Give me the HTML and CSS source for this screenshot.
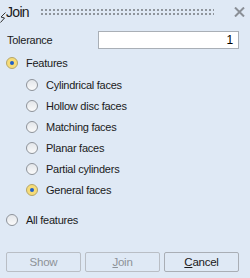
FILE: index.html
```html
<!DOCTYPE html>
<html lang="en">
<head>
  <meta charset="UTF-8">
  <title>Join</title>
  <link rel="stylesheet" href="styles.css">
</head>
<body>
  <div class="panel">
    <!-- Title bar -->
    <div class="titlebar">
      <svg class="cursor" width="7" height="11" viewBox="0 0 7 11">
        <path d="M5.5 0.5 L1 5 L4.5 6 L0.5 10.5" fill="none" stroke="#333" stroke-width="1"/>
      </svg>
      <span class="title">Join</span>
      <span class="grip"></span>
      <svg class="close" width="11" height="10" viewBox="0 0 11 10">
        <path d="M1 0.5 L10 9.5 M10 0.5 L1 9.5" stroke="#8a8f96" stroke-width="2"/>
      </svg>
    </div>

    <!-- Tolerance -->
    <div class="field">
      <label>Tolerance</label>
      <div class="input">1</div>
    </div>

    <!-- Options -->
    <div class="radio checked top"><span class="dot"></span>Features</div>
    <div class="sub">
      <div class="radio"><span class="dot"></span>Cylindrical faces</div>
      <div class="radio"><span class="dot"></span>Hollow disc faces</div>
      <div class="radio"><span class="dot"></span>Matching faces</div>
      <div class="radio"><span class="dot"></span>Planar faces</div>
      <div class="radio"><span class="dot"></span>Partial cylinders</div>
      <div class="radio checked"><span class="dot"></span>General faces</div>
    </div>
    <div class="radio all"><span class="dot"></span>All features</div>

    <!-- Buttons -->
    <div class="buttons">
      <div class="btn disabled">Show</div>
      <div class="btn disabled"><u>J</u>oin</div>
      <div class="btn"><u>C</u>ancel</div>
    </div>
  </div>
</body>
</html>
```
FILE: styles.css
```css
/* Global */
body {
  margin: 0;
  padding: 0;
  background-color: #dfe9f5;
  font-family: "Liberation Sans", Arial, sans-serif;
  font-size: 11px;
  letter-spacing: -0.25px;
  color: #1a1a1a;
}
.panel {
  width: 250px;
  height: 278px;
  display: flex;
  flex-direction: column;
}

/* Title bar */
.titlebar {
  height: 24px;
  display: flex;
  align-items: center;
  position: relative;
}
.cursor {
  position: absolute;
  left: 0;
  top: 12px;
}
.title {
  font-size: 14px;
  letter-spacing: -0.7px;
  margin-left: 6px;
  color: #1a1a1a;
}
.grip {
  flex: 1;
  height: 6px;
  margin: 0 20px 0 12px;
  background-image:
    linear-gradient(to right, transparent 2px, #dfe9f5 2px),
    linear-gradient(to bottom, #8f959c 2px, transparent 2px);
  background-size: 4px 4px;
}
.close {
  margin-right: 5px;
}

/* Tolerance */
.field {
  display: flex;
  align-items: center;
  justify-content: space-between;
  margin: 7px 11px 0 7px;
}
.input {
  width: 134px;
  height: 16px;
  line-height: 16px;
  border: 1px solid #a9afb6;
  background-color: #fff;
  text-align: right;
  padding-right: 5px;
  font-size: 12px;
  color: #000;
}

/* Radios */
.radio {
  display: flex;
  align-items: center;
  height: 21px;
}
.dot {
  width: 10px;
  height: 10px;
  border: 1px solid #8e939a;
  border-radius: 50%;
  background: linear-gradient(#e3e6ea, #fafafa);
  margin-right: 8px;
  display: flex;
  align-items: center;
  justify-content: center;
}
.checked .dot {
  background: #f6dc78;
  border-color: #b5a66a;
}
.checked .dot::after {
  content: "";
  width: 4px;
  height: 4px;
  border-radius: 50%;
  background-color: #1f5fc9;
}
.top {
  margin: 3px 0 0 6px;
}
.sub {
  margin: 1px 0 0 26px;
}
.all {
  margin: 9px 0 0 6px;
}

/* Buttons */
.buttons {
  display: flex;
  gap: 4px;
  margin: 22px 0 0 6px;
}
.btn {
  width: 73px;
  height: 18px;
  line-height: 18px;
  border: 1px solid #a9aeb5;
  border-radius: 2px;
  text-align: center;
  font-size: 11.5px;
}
.btn.disabled {
  color: #8d9298;
  border-color: #b9bec5;
}
```
